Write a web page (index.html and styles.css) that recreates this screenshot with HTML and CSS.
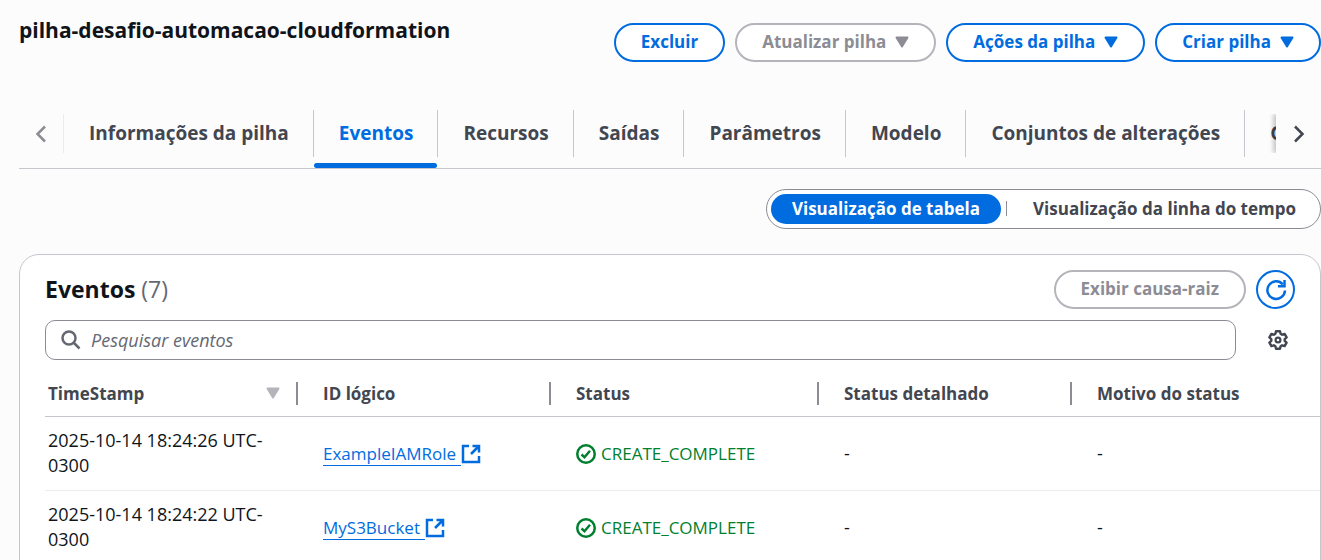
FILE: index.html
```html
<!DOCTYPE html>
<html lang="pt-BR">
<head>
<meta charset="utf-8">
<meta name="viewport" content="width=device-width, initial-scale=1">
<title>pilha-desafio-automacao-cloudformation</title>
<link rel="stylesheet" href="styles.css">
</head>
<body>
<svg class="sprite" aria-hidden="true">
  <symbol id="caret" viewBox="0 0 14 12"><path d="M1.5 1.5h11L7 10.5z" fill="currentColor" stroke="currentColor" stroke-width="2" stroke-linejoin="round"/></symbol>
  <symbol id="external" viewBox="0 0 20 20"><path d="M8 2H2v16h16v-6M11.500 2H18v6.500M18 2l-8 8" fill="none" stroke="currentColor" stroke-width="2.500"/></symbol>
  <symbol id="success" viewBox="0 0 20 20"><circle cx="10" cy="10" r="8.750" fill="none" stroke="currentColor" stroke-width="2.500"/><path d="M5.500 10.500l3 2.700 5.500-6.400" fill="none" stroke="currentColor" stroke-width="2.500"/></symbol>
</svg>
<main class="page">
  <header class="stack-header">
    <h1 class="stack-title">pilha-desafio-automacao-cloudformation</h1>
    <div class="actions">
      <button class="btn" type="button">Excluir</button>
      <button class="btn" type="button" disabled>Atualizar pilha <svg class="caret"><use href="#caret"/></svg></button>
      <button class="btn" type="button">Ações da pilha <svg class="caret"><use href="#caret"/></svg></button>
      <button class="btn" type="button">Criar pilha <svg class="caret"><use href="#caret"/></svg></button>
    </div>
  </header>

  <nav class="tabs" aria-label="Seções da pilha">
    <button class="scroll scroll-left" type="button" aria-label="Anterior" disabled><svg width="12" height="18" viewBox="0 0 12 18"><path d="M10 1.500L2.500 9l7.500 7.500" fill="none" stroke="currentColor" stroke-width="2.500"/></svg></button>
    <div class="tab-list" role="tablist">
      <button class="tab" role="tab" type="button">Informações da pilha</button>
      <button class="tab tab-active" role="tab" type="button" aria-selected="true">Eventos</button>
      <button class="tab" role="tab" type="button">Recursos</button>
      <button class="tab" role="tab" type="button">Saídas</button>
      <button class="tab" role="tab" type="button">Parâmetros</button>
      <button class="tab" role="tab" type="button">Modelo</button>
      <button class="tab" role="tab" type="button">Conjuntos de alterações</button>
      <button class="tab" role="tab" type="button">Git sync</button>
    </div>
    <button class="scroll scroll-right" type="button" aria-label="Próximo"><svg width="12" height="18" viewBox="0 0 12 18"><path d="M2 1.500L9.500 9 2 16.500" fill="none" stroke="currentColor" stroke-width="2.500"/></svg></button>
  </nav>

  <div class="view-row">
    <div class="segmented" role="group" aria-label="Visualização">
      <button class="segment segment-on" type="button" aria-pressed="true">Visualização de tabela</button>
      <button class="segment" type="button" aria-pressed="false">Visualização da linha do tempo</button>
    </div>
  </div>

  <section class="card">
    <div class="card-head">
      <h2 class="card-title">Eventos <span class="count">(7)</span></h2>
      <button class="btn" type="button" disabled>Exibir causa-raiz</button>
      <button class="btn btn-round" type="button" aria-label="Atualizar"><svg width="22" height="22" viewBox="0 0 22 22"><path d="M20 11.500A8.800 8.800 0 1 1 17.800 5.300" fill="none" stroke="currentColor" stroke-width="2.500"/><path d="M19.500 1v6.200h-6.500" fill="none" stroke="currentColor" stroke-width="2.500"/></svg></button>
    </div>
    <div class="filter-row">
      <label class="search">
        <svg width="20" height="20" viewBox="0 0 20 20" aria-hidden="true"><circle cx="8" cy="8" r="6.500" fill="none" stroke="currentColor" stroke-width="2.500"/><path d="M12.500 12.500l6 6" stroke="currentColor" stroke-width="2.500"/></svg>
        <input class="search-input" type="text" placeholder="Pesquisar eventos" aria-label="Pesquisar eventos">
      </label>
      <button class="gear" type="button" aria-label="Preferências"><svg width="20" height="20" viewBox="0 0 20 20"><path d="M8 1.300h4l.6 2.500 1.500.9 2.500-.8 2 3.500-1.900 1.700v1.800l1.900 1.700-2 3.500-2.500-.8-1.500.9-.6 2.500H8l-.6-2.500-1.500-.9-2.500.8-2-3.500 1.900-1.700V9.100L1.400 7.400l2-3.500 2.500.8 1.500-.9z" fill="none" stroke="currentColor" stroke-width="2.400" stroke-linejoin="round"/><circle cx="10" cy="10" r="2.400" fill="none" stroke="currentColor" stroke-width="2.200"/></svg></button>
    </div>
    <table class="events">
      <colgroup><col class="col"><col class="col"><col class="col-wide"><col class="col"><col></colgroup>
      <thead>
        <tr>
          <th scope="col"><div class="th">TimeStamp <svg class="caret sort"><use href="#caret"/></svg></div></th>
          <th scope="col"><div class="th">ID lógico</div></th>
          <th scope="col"><div class="th">Status</div></th>
          <th scope="col"><div class="th">Status detalhado</div></th>
          <th scope="col"><div class="th">Motivo do status</div></th>
        </tr>
      </thead>
      <tbody>
        <tr>
          <td>2025-10-14 18:24:26 UTC-0300</td>
          <td><a class="link" href="#role"><span class="link-text">ExampleIAMRole</span><svg class="icon"><use href="#external"/></svg></a></td>
          <td><span class="status"><svg class="icon"><use href="#success"/></svg>CREATE_COMPLETE</span></td>
          <td>-</td>
          <td>-</td>
        </tr>
        <tr>
          <td>2025-10-14 18:24:22 UTC-0300</td>
          <td><a class="link" href="#bucket"><span class="link-text">MyS3Bucket</span><svg class="icon"><use href="#external"/></svg></a></td>
          <td><span class="status"><svg class="icon"><use href="#success"/></svg>CREATE_COMPLETE</span></td>
          <td>-</td>
          <td>-</td>
        </tr>
      </tbody>
    </table>
  </section>
</main>
</body>
</html>
```
FILE: styles.css
```css
* { box-sizing: border-box; }
body {
  margin: 0;
  overflow: hidden;
  background: #fcfcfd;
  color: #0f141a;
  font: 18px/25px "Open Sans", "Noto Sans", sans-serif;
}
button, input { font: inherit; color: inherit; margin: 0; }
button { background: none; border: 0; padding: 0; white-space: nowrap; }
svg { flex: none; display: block; }
.sprite { position: absolute; width: 0; height: 0; }
.page { padding-left: 19px; }

.stack-header { display: flex; justify-content: space-between; align-items: flex-start; padding-top: 15px; }
.stack-title { margin: 0; font-size: 21px; line-height: 30px; font-weight: 700; }
.actions { display: flex; gap: 10px; padding-top: 8px; }
.btn {
  display: flex; align-items: center; justify-content: center; gap: 9px;
  height: 39px; padding: 0 25px 2px;
  border: 2px solid #006ce0; border-radius: 20px;
  background: #fff; color: #006ce0;
  font-size: 17px; font-weight: 700;
}
.btn:disabled { border-color: #b4b4bb; color: #8c8c94; }
.btn-round { width: 39px; padding: 0; }
.caret { width: 14px; height: 12px; }

.tabs { display: flex; align-items: flex-start; height: 59px; margin-top: 48px; border-bottom: 1px solid #c6c6cd; }
.tab-list { display: flex; flex: 1; min-width: 0; overflow: hidden; }
.tab { position: relative; flex: none; height: 58px; padding: 0 25px 11px; color: #424650; font-size: 19px; font-weight: 700; }
.tab:not(:last-child)::before { content: ""; position: absolute; right: 0; top: 0; height: 47px; border-right: 1px solid #c6c6cd; }
.tab-active { color: #006ce0; }
.tab-active::after { content: ""; position: absolute; left: 0; right: 1px; bottom: 0; height: 5px; border-radius: 5px; background: #006ce0; }
.scroll { display: flex; align-items: center; justify-content: center; width: 45px; height: 39px; margin-top: 4px; color: #424650; }
.scroll-left { border-right: 1px solid #ebebf0; color: #8c8c94; }
.scroll-right { position: relative; background: #fcfcfd; box-shadow: -3px 0 4px #00000033; clip-path: inset(0 0 0 -8px); }

.view-row { display: flex; justify-content: flex-end; padding-top: 20px; }
.segmented { display: flex; align-items: center; height: 40px; padding: 0 4px; border: 1px solid #8c8c94; border-radius: 20px; background: #fff; }
.segment { height: 30px; padding: 0 20px 2px; border-radius: 20px; color: #424650; font-size: 17px; font-weight: 700; }
.segment-on { padding: 0 21px 2px; background: #006ce0; color: #fff; }
.segment-on + .segment { display: flex; align-items: center; gap: 26px; padding-left: 5px; }
.segment-on + .segment::before { content: ""; height: 15px; border-left: 1px solid #8c8c94; }

.card { margin-top: 25px; padding: 15px 0 0 25px; border: 1px solid #c6c6cd; border-radius: 20px 20px 0 0; background: #fff; }
.card-head { display: flex; align-items: center; gap: 10px; padding-right: 25px; }
.card-title { flex: 1; margin: 0; padding-bottom: 2px; font-size: 23px; line-height: 30px; font-weight: 700; }
.count { color: #656871; font-weight: 400; }
.filter-row { display: flex; align-items: center; gap: 32px; padding: 11px 32px 0 0; }
.search { display: flex; flex: 1; align-items: center; gap: 10px; height: 40px; padding: 0 15px; border: 1px solid #8c8c94; border-radius: 10px; color: #656871; }
.search-input { flex: 1; min-width: 0; padding: 0; border: 0; outline: 0; background: none; }
.search-input::placeholder { color: #656871; font-style: italic; opacity: 1; }
.gear { color: #424650; }

.events { width: 100%; margin-top: 7px; table-layout: fixed; border-collapse: separate; border-spacing: 0; }
.col { width: 253px; }
.col-wide { width: 268px; }
.events th { height: 50px; padding: 3px 0 0; border-bottom: 1px solid #c6c6cd; color: #424650; font-size: 17px; font-weight: 700; text-align: left; }
.th { display: flex; align-items: center; justify-content: space-between; height: 23px; padding: 0 16px 0 25px; border-right: 2px solid #8c8c94; white-space: nowrap; }
.events th:first-child .th { padding-left: 3px; }
.events th:last-child .th { border-right: 0; }
.sort { color: #b4b4bb; }
.events td { height: 73px; padding: 0 25px; border-bottom: 1px solid #ebebf0; }
.events tbody tr:first-child td { height: 74px; padding-bottom: 1px; }
.events td:first-child { padding-left: 3px; }
.link, .status { display: inline-flex; align-items: center; color: #006ce0; font-size: 17px; text-decoration: none; vertical-align: middle; }
.link-text { padding-right: 5px; line-height: 22px; border-bottom: 1px solid #006ce0; }
.status { gap: 5px; color: #00802f; }
.icon { width: 20px; height: 20px; }
```
